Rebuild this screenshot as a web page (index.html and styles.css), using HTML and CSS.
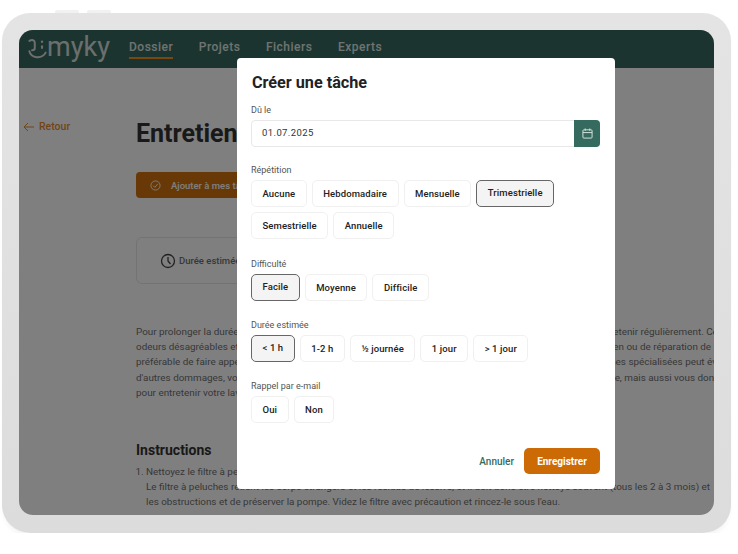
FILE: index.html
```html
<!DOCTYPE html>
<html lang="fr">
<head>
  <meta charset="UTF-8">
  <title>Créer une tâche</title>
  <link rel="stylesheet" href="styles.css">
</head>
<body>
  <div class="tabs"><span></span><span></span></div>
  <div class="device">
    <div class="screen">
      <header class="topbar">
        <div class="logo">
          <svg class="logo-mark" width="19" height="22" viewBox="0 0 21 24" fill="none" stroke="currentColor" stroke-width="2.200" stroke-linecap="round">
            <path d="M1.500 3c3-1.500 6-1 6 2v6c0 1.500-1 2.500-3 2.500"/>
            <path d="M1.500 14.500c2 8 14 9 18 1.500"/>
            <circle cx="15.500" cy="4" r="1.300" fill="currentColor" stroke="none"/>
            <path d="M15.500 9v2"/>
          </svg>
          <span>myky</span>
        </div>
        <nav class="nav">
          <a class="nav-link current">Dossier</a>
          <a class="nav-link">Projets</a>
          <a class="nav-link">Fichiers</a>
          <a class="nav-link">Experts</a>
        </nav>
      </header>

      <div class="page">
        <a class="back">
          <svg width="12" height="10" viewBox="0 0 12 10" fill="none" stroke="currentColor" stroke-width="1"><path d="M11 5H1M5 1 1 5l4 4"/></svg>
          Retour
        </a>
        <div class="article">
          <h1>Entretien du lave-linge</h1>
          <button class="add-btn">
            <svg width="11" height="11" viewBox="0 0 12 12" fill="none" stroke="currentColor" stroke-width="1"><circle cx="6" cy="6" r="5"/><path d="m3.500 6.200 1.800 1.800 3.200-3.800"/></svg>
            Ajouter à mes tâches
          </button>
          <div class="info-card">
            <svg width="16" height="16" viewBox="0 0 16 16" fill="none" stroke="currentColor" stroke-width="1.300"><circle cx="8" cy="8" r="6.500"/><path d="M8 4v4l2.500 3"/></svg>
            Durée estimée
          </div>
          <p class="intro">Pour prolonger la durée de vie de ce lave-linge et éviter les pannes fréquentes, il est important et utile de l'entretenir régulièrement. Cela permet d'éviter les<br>
          odeurs désagréables et de réduire les frais toujours élevés liés aux pannes, et, surtout, tous les coûts d'entretien ou de réparation de l'appareil. Il est<br>
          préférable de faire appel à un professionnel qualifié, car le recours à des services d'entretien et à des entreprises spécialisées peut éviter<br>
          d'autres dommages, vous faire gagner du temps et de l'argent, tout en évitant de mauvaises surprises à l'usage, mais aussi vous donner des conseils<br>
          pour entretenir votre lave-linge au quotidien.</p>
          <h2>Instructions</h2>
          <ol class="steps">
            <li>Nettoyez le filtre à peluches<br>
            Le filtre à peluches retient les corps étrangers et les résidus de lessive, et il doit donc être nettoyé souvent (tous les 2 à 3 mois) et<br>
            les obstructions et de préserver la pompe. Videz le filtre avec précaution et rincez-le sous l'eau.</li>
          </ol>
        </div>
      </div>

      <div class="overlay"></div>

      <div class="modal">
        <h3>Créer une tâche</h3>

        <div class="label">Dû le</div>
        <div class="date-field">
          <span class="date-value">01.07.2025</span>
          <span class="date-btn">
            <svg width="11" height="11" viewBox="0 0 12 12" fill="none" stroke="currentColor" stroke-width="1"><rect x="1" y="2" width="10" height="9" rx="1"/><path d="M1 5h10M3.500 .5v2.500M8.500 .5v2.500"/></svg>
          </span>
        </div>

        <div class="label gap-repeat">Répétition</div>
        <div class="options">
          <span class="opt">Aucune</span>
          <span class="opt">Hebdomadaire</span>
          <span class="opt">Mensuelle</span>
          <span class="opt selected">Trimestrielle</span>
          <span class="opt">Semestrielle</span>
          <span class="opt">Annuelle</span>
        </div>

        <div class="label gap-first">Difficulté</div>
        <div class="options">
          <span class="opt selected">Facile</span>
          <span class="opt">Moyenne</span>
          <span class="opt">Difficile</span>
        </div>

        <div class="label gap-group">Durée estimée</div>
        <div class="options">
          <span class="opt selected">&lt; 1 h</span>
          <span class="opt">1-2 h</span>
          <span class="opt">½ journée</span>
          <span class="opt">1 jour</span>
          <span class="opt">&gt; 1 jour</span>
        </div>

        <div class="label gap-group">Rappel par e-mail</div>
        <div class="options">
          <span class="opt">Oui</span>
          <span class="opt">Non</span>
        </div>

        <div class="modal-footer">
          <a class="cancel">Annuler</a>
          <button class="save">Enregistrer</button>
        </div>
      </div>
    </div>
  </div>
</body>
</html>
```

FILE: styles.css
```css
* {
  box-sizing: border-box;
}
body {
  margin: 0;
  background: #fff;
  font-family: Roboto, "Noto Sans", sans-serif;
  color: #222;
  overflow: hidden;
}
.tabs {
  display: flex;
  gap: 8px;
  height: 13px;
  padding: 10px 0 0 55px;
}
.tabs span {
  width: 24px;
  height: 3px;
  background: #f1f1f1;
  border-radius: 2px 2px 0 0;
}
.device {
  width: 729px;
  height: 520px;
  margin-left: 2px;
  padding: 17px;
  background: linear-gradient(#e4e4e4, #dcdcdc);
  border-radius: 28px;
  box-shadow: 0 5px 6px -3px #eee;
}
.screen {
  position: relative;
  height: 485px;
  overflow: hidden;
  background: #fff;
  border-radius: 14px;
}
.topbar {
  display: flex;
  align-items: center;
  height: 38px;
  padding-left: 9px;
  background: #38695f;
}
.logo {
  display: flex;
  align-items: center;
  flex-shrink: 0;
  width: 101px;
  color: #d8dedb;
  font-size: 27px;
  font-weight: 400;
}
.logo-mark {
  margin-right: 0;
}
.logo span {
  line-height: 30px;
  margin-top: -4px;
}
.nav {
  display: flex;
  gap: 25.500px;
}
.nav-link {
  padding-bottom: 3px;
  border-bottom: 2px solid transparent;
  color: #dfe6e3;
  font-size: 12px;
  font-weight: 500;
  letter-spacing: .5px;
}
.nav-link.current {
  border-color: #f09020;
}
.page {
  display: flex;
  height: 447px;
  padding-left: 4px;
}
.back {
  display: flex;
  align-items: center;
  flex-shrink: 0;
  gap: 4px;
  align-self: flex-start;
  width: 113px;
  margin-top: 52px;
  color: #e58a2e;
  font-size: 10.500px;
  font-weight: 500;
}
.article {
  flex-shrink: 0;
  width: 578px;
  color: #707070;
  font-size: 9.900px;
}
h1 {
  margin: 49px 0 0;
  color: #333;
  font-size: 25px;
  line-height: 34px;
  white-space: nowrap;
}
.add-btn {
  display: flex;
  align-items: center;
  gap: 10px;
  width: 200px;
  height: 26px;
  margin-top: 21px;
  padding: 0 14px;
  background: #d0720c;
  border: 0;
  border-radius: 4px;
  color: #fff;
  font: 500 9.500px Roboto, sans-serif;
}
.info-card {
  display: flex;
  align-items: center;
  gap: 3px;
  width: 470px;
  height: 47px;
  margin-top: 39px;
  padding-left: 23px;
  border: 1px solid #e6e6e6;
  border-radius: 6px;
  color: #707070;
  font-size: 9.500px;
  font-weight: 500;
}
.info-card svg {
  color: #444;
}
.intro {
  margin: 40px 0 0;
  line-height: 15.200px;
  white-space: nowrap;
}
h2 {
  margin: 41px 0 0;
  color: #333;
  font-size: 14px;
  line-height: 18px;
}
.steps {
  margin: 5px 0 0;
  padding-left: 10px;
  line-height: 15px;
  white-space: nowrap;
}
.overlay {
  position: absolute;
  inset: 0;
  background: rgba(0, 0, 0, .5);
}
.modal {
  position: absolute;
  left: 218px;
  top: 28px;
  display: flex;
  flex-direction: column;
  width: 378px;
  height: 431px;
  padding: 14px 15px 15px 14px;
  background: #fff;
  border-radius: 4px;
}
h3 {
  margin: 0;
  padding-left: 1px;
  color: #222;
  font-size: 16.200px;
  font-weight: 700;
  line-height: 21px;
}
.label {
  margin-top: 12px;
  margin-bottom: 4px;
  color: #555;
  font-size: 9px;
  line-height: 11px;
}
.gap-repeat {
  margin-top: 18px;
}
.gap-first {
  margin-top: 20px;
}
.gap-group {
  margin-top: 19px;
}
.date-field {
  display: flex;
  align-items: center;
  height: 27px;
  border: 1px solid #e8e8e8;
  border-radius: 4px;
  color: #333;
  font-size: 9.500px;
  letter-spacing: .4px;
}
.date-value {
  flex: 1;
  padding: 0 0 2px 10px;
}
.date-btn {
  display: flex;
  align-items: center;
  justify-content: center;
  width: 26px;
  height: 27px;
  margin-right: -1px;
  background: #356b5e;
  border-radius: 0 4px 4px 0;
  color: #dfe9e6;
}
.options {
  display: flex;
  flex-wrap: wrap;
  gap: 5px;
  max-width: 320px;
}
.opt {
  display: flex;
  align-items: center;
  height: 27px;
  padding: 0 10.500px;
  border: 1px solid #f0f0f0;
  border-radius: 5px;
  color: #222;
  font-size: 9.500px;
  font-weight: 500;
  letter-spacing: .1px;
  white-space: nowrap;
}
.opt.selected {
  padding-bottom: 2px;
  background: #f4f4f4;
  border-color: #666;
}
.modal-footer {
  display: flex;
  align-items: center;
  justify-content: flex-end;
  gap: 10px;
  margin-top: auto;
}
.cancel {
  color: #356b5e;
  font-size: 10px;
  font-weight: 500;
}
.save {
  width: 76px;
  height: 26px;
  background: #cc6a06;
  border: 0;
  border-radius: 5px;
  color: #fff;
  font: 700 10px Roboto, sans-serif;
}
```
